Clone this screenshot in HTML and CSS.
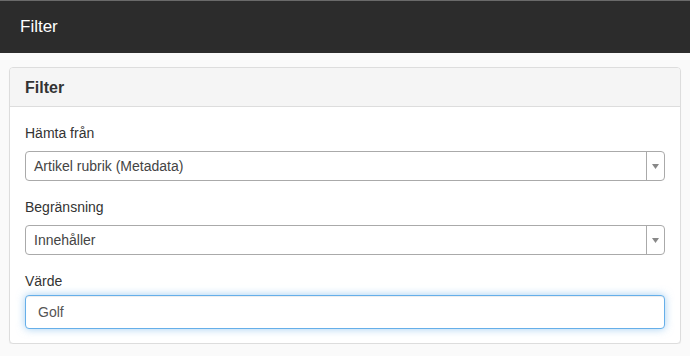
FILE: index.html
```html
<!DOCTYPE html>
<html lang="sv">
<head>
    <meta charset="UTF-8">
    <meta name="viewport" content="width=device-width, initial-scale=1.0">
    <title>Filter</title>
    <link rel="stylesheet" href="styles.css">
</head>
<body>

    <!-- Sidhuvud -->
    <div class="topbar">Filter</div>

    <div class="panel">
        <div class="panel-heading">Filter</div>

        <div class="panel-body">
            <!-- Hämta från -->
            <div class="form-group">
                <label>Hämta från</label>
                <div class="select-choice">
                    <span class="select-text">Artikel rubrik (Metadata)</span>
                    <div class="select-arrow">
                        <svg width="7" height="5" viewBox="0 0 7 5"><path d="M0 0H7L3.5 5Z" fill="#888"/></svg>
                    </div>
                </div>
            </div>

            <!-- Begränsning -->
            <div class="form-group">
                <label>Begränsning</label>
                <div class="select-choice">
                    <span class="select-text">Innehåller</span>
                    <div class="select-arrow">
                        <svg width="7" height="5" viewBox="0 0 7 5"><path d="M0 0H7L3.5 5Z" fill="#888"/></svg>
                    </div>
                </div>
            </div>

            <!-- Värde -->
            <div class="form-group last">
                <label for="value" class="label-tight">Värde</label>
                <input type="text" id="value" class="text-input focus" value="Golf">
            </div>
        </div>
    </div>

</body>
</html>
```

FILE: styles.css
```css
/* 基本のスタイル */
body {
    font-family: "Liberation Sans", Arial, sans-serif;
    font-size: 14px;
    line-height: 20px;
    color: #333;
    margin: 0;
    padding: 0;
    background-color: #fafafa;
}

.topbar {
    padding: 16px 20px;
    border-top: 1px solid #6a6a6a;
    background-color: #2c2c2c;
    color: #fff;
    font-size: 17px;
    line-height: 20px;
}

.panel {
    margin: 14px 9px 0;
    background-color: #fff;
    border: 1px solid #ddd;
    border-radius: 4px;
    box-shadow: 0 1px 1px rgba(0, 0, 0, 0.05);
}

.panel-heading {
    padding: 10px 15px 8px;
    background-color: #f5f5f5;
    border-bottom: 1px solid #ddd;
    border-radius: 3px 3px 0 0;
    font-size: 16px;
    font-weight: bold;
    line-height: 20px;
}

.panel-body {
    padding: 16px 15px 14px;
}

.form-group {
    margin-bottom: 16px;
}

.form-group.last {
    margin-bottom: 0;
}

.form-group label {
    display: block;
    margin-bottom: 8px;
}

.form-group .label-tight {
    margin-bottom: 4px;
}

/* select2風のセレクト */
.select-choice {
    display: flex;
    height: 28px;
    border: 1px solid #aaa;
    border-radius: 4px;
    background-color: #fff;
}

.select-text {
    flex: 1;
    padding-left: 8px;
    line-height: 28px;
    color: #444;
}

.select-arrow {
    width: 17px;
    display: flex;
    align-items: center;
    justify-content: center;
    border-left: 1px solid #aaa;
}

.text-input {
    display: block;
    box-sizing: border-box;
    width: 100%;
    height: 34px;
    padding: 6px 12px;
    font-family: inherit;
    font-size: 14px;
    color: #555;
    border: 1px solid #ccc;
    border-radius: 4px;
    outline: none;
}

.text-input.focus {
    border-color: #66afe9;
    box-shadow: inset 0 1px 1px rgba(0, 0, 0, 0.075), 0 0 8px rgba(102, 175, 233, 0.6);
}
```
